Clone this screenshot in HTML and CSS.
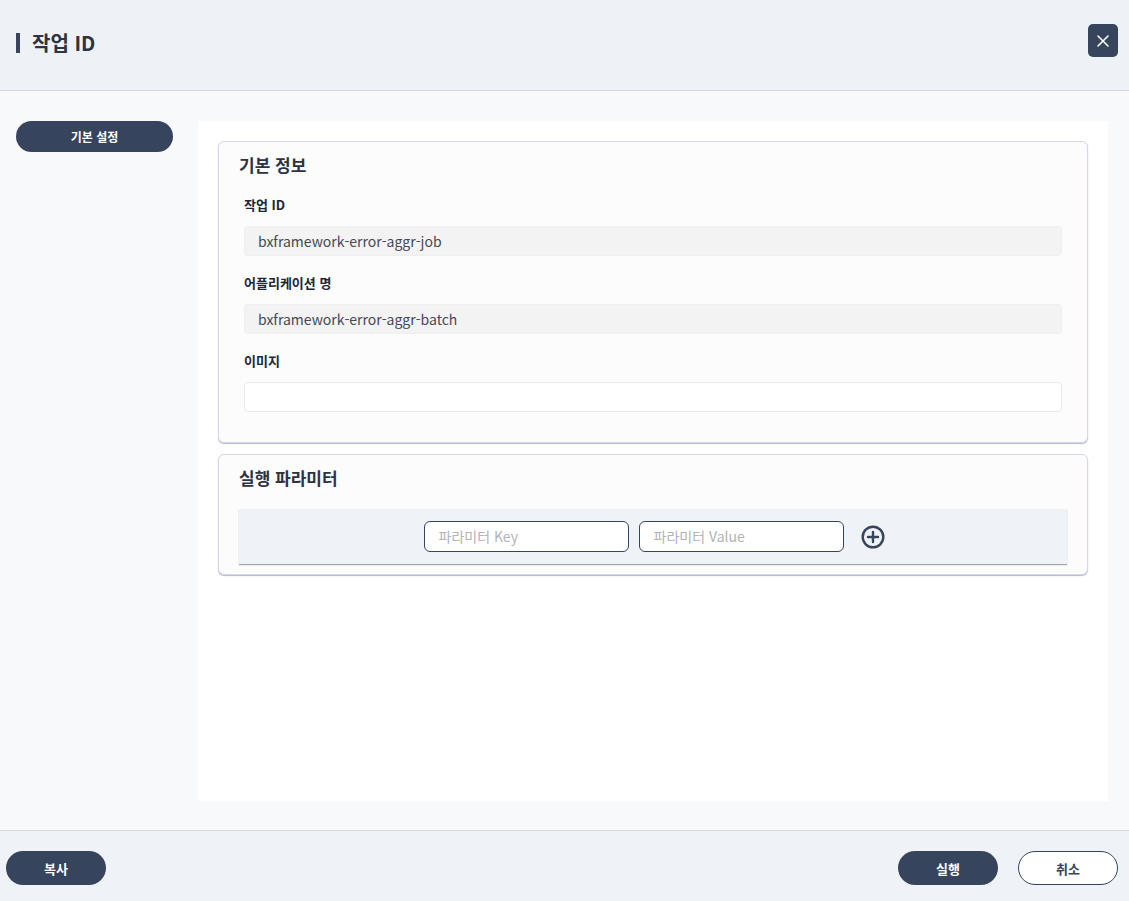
FILE: index.html
```html
<!DOCTYPE html>
<html lang="ko">
<head>
<meta charset="utf-8">
<title>작업 ID</title>
<link rel="stylesheet" href="styles.css">
</head>
<body>
<div class="page">
  <header class="header">
    <h1 class="title">작업 ID</h1>
    <button class="close-btn" aria-label="close">
      <svg width="14" height="14" viewBox="0 0 14 14"><path d="M2 2 L12 12 M12 2 L2 12" stroke="#fff" stroke-width="1.6" stroke-linecap="round"/></svg>
    </button>
  </header>
  <div class="body">
    <aside class="sidebar">
      <button class="pill pill-dark nav-btn">기본 설정</button>
    </aside>
    <main class="main">
      <section class="card">
        <h2 class="card-title">기본 정보</h2>
        <div class="fields">
          <label class="label">작업 ID</label>
          <div class="input input-readonly">bxframework-error-aggr-job</div>
          <label class="label">어플리케이션 명</label>
          <div class="input input-readonly">bxframework-error-aggr-batch</div>
          <label class="label">이미지</label>
          <div class="input input-empty"></div>
        </div>
      </section>
      <section class="card card-params">
        <h2 class="card-title">실행 파라미터</h2>
        <div class="param-row">
          <div class="param-input">파라미터 Key</div>
          <div class="param-input">파라미터 Value</div>
          <svg class="plus" width="26" height="26" viewBox="0 0 26 26"><circle cx="13" cy="13" r="10.3" fill="none" stroke="#36445e" stroke-width="2.4"/><path d="M13 8 V18 M8 13 H18" stroke="#36445e" stroke-width="2.4" stroke-linecap="round"/></svg>
        </div>
      </section>
    </main>
  </div>
  <footer class="footer">
    <button class="pill pill-dark foot-btn">복사</button>
    <div class="foot-right">
      <button class="pill pill-dark foot-btn">실행</button>
      <button class="pill pill-outline foot-btn">취소</button>
    </div>
  </footer>
</div>
</body>
</html>
```

FILE: styles.css
```css
* { box-sizing: border-box; }
html, body { margin: 0; padding: 0; }
body {
  font-family: "Noto Sans CJK KR", "Noto Sans", sans-serif;
  color: #2d3343;
  background: #f8f9fb;
}
.page {
  width: 1129px;
  height: 901px;
  display: flex;
  flex-direction: column;
}
.header {
  height: 91px;
  background: #eef2f7;
  border-bottom: 1px solid #d3d7de;
  display: flex;
  align-items: center;
  justify-content: space-between;
  padding: 0 11px 0 16px;
}
.title {
  margin: 0;
  font-size: 20px;
  font-weight: 700;
  line-height: 20px;
  color: #2d3343;
  border-left: 4px solid #36445e;
  padding-left: 12px;
  height: 20px;
  display: flex;
  align-items: center;
  margin-top: -4px;
}
.close-btn {
  width: 30px;
  height: 33px;
  border: none;
  border-radius: 5px;
  background: #36445e;
  display: flex;
  align-items: center;
  justify-content: center;
  padding: 0;
  margin-top: -9px;
}
.body {
  flex: 1;
  display: flex;
  padding: 30px 21px 29px 16px;
  gap: 25px;
  background: #f8f9fb;
}
.sidebar { width: 157px; flex: none; }
.pill {
  font-family: "Noto Sans CJK KR", sans-serif;
  font-weight: 700;
  border-radius: 999px;
  cursor: pointer;
  padding: 0;
}
.pill-dark { background: #36445e; color: #fff; border: none; }
.pill-outline { background: #fff; color: #36445e; border: 1px solid #36445e; }
.nav-btn {
  width: 157px;
  height: 31px;
  font-size: 12px;
}
.main {
  flex: 1;
  background: #fff;
  padding: 20px 20px;
  display: flex;
  flex-direction: column;
  gap: 11px;
}
.card {
  background: #fcfcfd;
  border: 1px solid #d2d7ea;
  border-radius: 6px;
  box-shadow: 0 1px 1px rgba(90, 100, 150, 0.45);
  padding: 12px 25px 30px 20px;
}
.card-title {
  margin: 0;
  font-size: 17px;
  font-weight: 700;
  line-height: 22px;
  color: #2d3343;
}
.fields {
  display: flex;
  flex-direction: column;
  margin-left: 5px;
  padding-top: 20px;
}
.label {
  font-size: 13px;
  font-weight: 700;
  line-height: 18px;
  color: #1f2533;
  margin-bottom: 12px;
}
.input {
  height: 30px;
  border-radius: 4px;
  font-size: 14px;
  line-height: 30px;
  padding-left: 13px;
  color: #444a55;
  margin-bottom: 18px;
}
.input:last-child { margin-bottom: 0; }
.input-readonly { background: #f3f3f4; border: 1px solid #efeff0; line-height: 28px; }
.input-empty { background: #fff; border: 1px solid #e8e9ec; }
.card-params { padding: 12px 20px 10px 20px; }
.card-params .card-title { padding-left: 0; }
.param-row {
  margin-top: 20px;
  height: 55px;
  background: #eff3f8;
  box-shadow: 0 1px 1px rgba(0, 0, 0, 0.35);
  display: flex;
  align-items: center;
  justify-content: center;
  gap: 10px;
  padding-left: 3px;
}
.param-input {
  width: 205px;
  height: 31px;
  background: #fff;
  border: 1px solid #36445e;
  border-radius: 6px;
  font-size: 14px;
  line-height: 29px;
  padding-left: 14px;
  color: #b3b3b6;
}
.plus { margin-left: 6px; }
.footer {
  height: 71px;
  background: #eff3f8;
  border-top: 1px solid #d3d7de;
  display: flex;
  justify-content: space-between;
  padding: 20px 11px 0 6px;
}
.foot-right { display: flex; gap: 20px; }
.foot-btn {
  width: 100px;
  height: 34px;
  font-size: 13px;
}
```
